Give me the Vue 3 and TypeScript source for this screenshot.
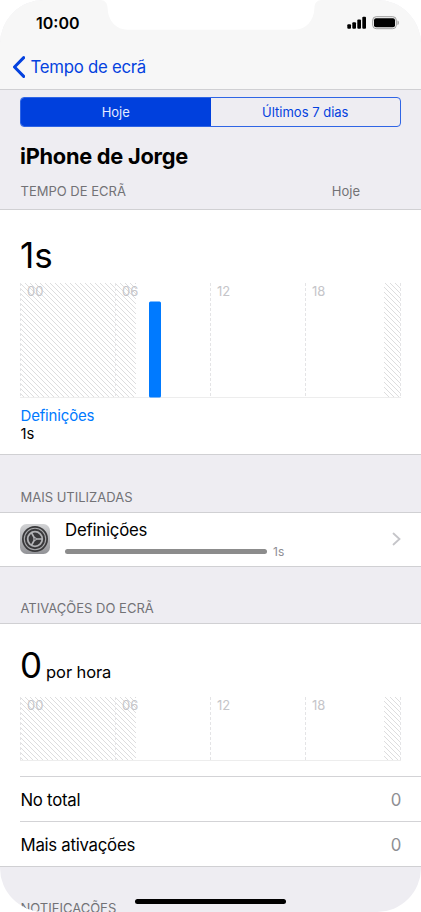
<script setup lang="ts">
interface Activation { label: string; value: number }
const hours: string[] = ['00', '06', '12', '18']
const usageBar = { start: 129, width: 12, height: 96 }
const appShare = 202
const activations: Activation[] = [
  { label: 'No total', value: 0 },
  { label: 'Mais ativações', value: 0 },
]
</script>

<template>
  <div class="phone">
    <svg class="notch" width="222" height="30" viewBox="0 0 222 30" aria-hidden="true">
      <path d="M0 0C5 0 7.5 3 7.5 8C8 21 16 29.7 28 29.7H194C206 29.7 214 21 214.500 8C214.500 3 217 0 222 0Z" fill="#fff" />
    </svg>

    <header class="top">
      <div class="status">
        <span class="clock">10:00</span>
        <div class="indicators">
          <svg width="20" height="13" viewBox="0 0 20 13">
            <rect x="0.300" y="8.200" width="3.700" height="4.500" rx="1" />
            <rect x="5.300" y="6.200" width="3.700" height="6.500" rx="1" />
            <rect x="10.300" y="3.500" width="3.700" height="9.200" rx="1" />
            <rect x="15.300" y="0.800" width="3.700" height="11.900" rx="1" />
          </svg>
          <svg width="28" height="14" viewBox="0 0 28 14">
            <rect x="0.700" y="0.700" width="23.600" height="12" rx="3.500" fill="#f7f7f7" stroke="#9c9c9c" />
            <rect x="2" y="2.200" width="21" height="9" rx="2" />
            <path d="M25.500 4.500C27.300 5 27.300 8.500 25.500 9Z" fill="#9c9c9c" />
          </svg>
        </div>
      </div>
      <div class="back">
        <svg width="13" height="22" viewBox="0 0 13 22"><path d="M11.700 1.600L2.500 11L11.700 20.400" fill="none" stroke="#0442df" stroke-width="3" stroke-linecap="round" stroke-linejoin="round" /></svg>
        <span>Tempo de ecrã</span>
      </div>
    </header>

    <section class="intro">
      <div class="segments">
        <div class="segment active">Hoje</div>
        <div class="segment">Últimos 7 dias</div>
      </div>
      <h1>iPhone de Jorge</h1>
      <div class="caption"><span>TEMPO DE ECRÃ</span><span>Hoje</span></div>
    </section>

    <section class="panel usage">
      <div class="big">1s</div>
      <div class="chart tall">
        <svg class="grid" width="381" height="115">
          <defs>
            <pattern id="hatch" width="5" height="5" patternUnits="userSpaceOnUse">
              <path d="M-1 -1L6 6M4 -1L6 1M-1 4L1 6" stroke="#d4d4d6" stroke-width="0.800" />
            </pattern>
          </defs>
          <rect width="116" height="114" fill="url(#hatch)" />
          <rect x="364" width="17" height="114" fill="url(#hatch)" />
          <path d="M.5 0V114M95.500 0V114M190.500 0V114M285.500 0V114M380.500 0V114" stroke="#e4e4e6" stroke-dasharray="3 2" />
          <path d="M0 114.500H381" stroke="#ededed" />
          <rect :x="usageBar.start" :y="114.500 - usageBar.height" :width="usageBar.width" :height="usageBar.height" rx="1.500" fill="#007aff" />
        </svg>
        <div class="hours"><span v-for="hour in hours" :key="hour">{{ hour }}</span></div>
      </div>
      <div class="legend">Definições</div>
      <div class="duration">1s</div>
    </section>

    <div class="heading"><span>MAIS UTILIZADAS</span></div>
    <section class="panel app">
      <svg class="app-icon" width="30" height="30" viewBox="0 0 30 30">
        <defs><linearGradient id="metal" x2="0" y2="1"><stop stop-color="#d2d3d5" /><stop offset="1" stop-color="#929397" /></linearGradient></defs>
        <rect width="30" height="30" rx="6.500" fill="url(#metal)" />
        <circle cx="15" cy="15" r="13" fill="#39393b" />
        <circle cx="15" cy="15" r="10.700" fill="none" stroke="#a8a9ac" stroke-width="1.100" />
        <circle cx="15" cy="15" r="7.300" fill="none" stroke="#b0b1b4" stroke-width="1.800" />
        <path d="M15 15H22M15 15L11.400 8.700M15 15L11.400 21.300" stroke="#b4b5b8" stroke-width="1.700" />
        <circle cx="15" cy="15" r="1.700" fill="#b4b5b8" /><circle cx="15" cy="15" r=".7" fill="#39393b" />
      </svg>
      <div class="app-info">
        <div class="app-name">Definições</div>
        <div class="meter"><i :style="{ width: appShare + 'px' }"></i><span>1s</span></div>
      </div>
      <svg class="chevron" width="9" height="14" viewBox="0 0 9 14"><path d="M1.500 1.500L7.500 7L1.500 12.500" fill="none" stroke="#c5c5c9" stroke-width="1.800" stroke-linecap="round" /></svg>
    </section>

    <div class="heading wake"><span>ATIVAÇÕES DO ECRÃ</span></div>
    <section class="panel pickups">
      <div class="rate"><span class="big">0</span><span class="unit">por hora</span></div>
      <div class="chart">
        <svg class="grid" width="381" height="64">
          <rect width="116" height="63" fill="url(#hatch)" />
          <rect x="364" width="17" height="63" fill="url(#hatch)" />
          <path d="M.5 0V63M95.500 0V63M190.500 0V63M285.500 0V63M380.500 0V63" stroke="#e4e4e6" stroke-dasharray="3 2" />
          <path d="M0 63.500H381" stroke="#ededed" />
        </svg>
        <div class="hours"><span v-for="hour in hours" :key="hour">{{ hour }}</span></div>
      </div>
      <div class="rows">
        <div v-for="item in activations" :key="item.label" class="row">
          <span>{{ item.label }}</span><span class="value">{{ item.value }}</span>
        </div>
      </div>
    </section>
    <div class="heading last"><span>NOTIFICAÇÕES</span></div>
    <div class="home"></div>
  </div>
</template>

<style>
body { background: #fff; }
</style>
<style scoped>
* { box-sizing: border-box; }
.phone { position: relative; width: 421px; height: 912px; overflow: hidden; border-radius: 44px; background: #eeedf2; color: #000; font-family: Inter, "Liberation Sans", sans-serif; white-space: nowrap; }
svg { display: block; flex: none; }
.notch { position: absolute; left: 100px; top: 0; }
.top { height: 90px; background: #f7f7f7; border-bottom: 1px solid #d0d0d3; }
.status { height: 46px; padding: 0 21px 0 36px; display: flex; justify-content: space-between; }
.clock { margin-top: 13px; line-height: 20px; font-size: 16px; font-weight: 600; }
.indicators { display: flex; gap: 5px; margin-top: 16px; }
.back { display: flex; align-items: center; height: 42px; padding-left: 12px; gap: 5.500px; color: #0442df; font-size: 16.800px; letter-spacing: -.27px; }
.intro { height: 120px; padding: 7px 20px 0; border-bottom: 1px solid #d0d0d3; }
.segments { display: flex; width: 381px; height: 30px; border: 1px solid #2f65e5; border-radius: 4px; overflow: hidden; color: #0442df; font-size: 13px; line-height: 29px; text-align: center; }
.segment { flex: 1; }
.active { color: #e4eaff; background: #0040dd; }
h1 { margin: 16px 0 0; font-size: 21.800px; line-height: 26px; font-weight: 700; letter-spacing: -.26px; }
.caption { display: flex; justify-content: space-between; margin-top: 14px; padding-right: 41px; color: #727276; font-size: 13px; line-height: 16px; }
.caption span:first-child, .heading span { padding-left: .5px; }
.panel { background: #fff; border-bottom: 1px solid #d0d0d3; }
.usage { height: 245px; padding: 25px 20px 0; }
.big { font-size: 35px; line-height: 40px; }
.chart { position: relative; height: 64px; }
.tall { height: 115px; margin-top: 8px; }
.grid { position: absolute; left: 0; top: 0; }
.hours { position: relative; display: grid; grid-template-columns: repeat(4, 95px); font-size: 13px; line-height: 16px; color: #c5c5c9; }
.hours span { padding-left: 7px; }
.legend { margin-top: 8px; padding-left: .5px; color: #007aff; font-size: 15px; line-height: 19px; letter-spacing: -.17px; }
.duration { padding-left: .5px; font-size: 14.800px; line-height: 18px; }
.heading { display: flex; align-items: flex-end; height: 58px; padding: 0 20px 7px; border-bottom: 1px solid #d0d0d3; color: #727276; font-size: 13px; line-height: 16px; }
.app { height: 54px; padding: 0 20px; display: flex; align-items: center; }
.app-icon, .chevron { margin-bottom: 1px; }
.app-info { margin-left: 15px; flex: 1; }
.app-name { font-size: 16.800px; line-height: 22px; margin-top: 1px; letter-spacing: -.22px; }
.meter { display: flex; align-items: center; gap: 6px; height: 20px; font-size: 12px; color: #8e8e93; }
.meter i { height: 5px; border-radius: 3px; background: #8c8c8c; }
.wake { height: 57px; }
.pickups { height: 243px; padding: 21px 0 0 20px; }
.rate { height: 52px; display: flex; align-items: baseline; gap: 4px; }
.unit { font-size: 16.500px; letter-spacing: -.1px; }
.rows { margin-top: 15px; }
.row { height: 45px; display: flex; justify-content: space-between; align-items: center; border-top: 1px solid #d3d3d6; padding: 1px 20px 0 .5px; font-size: 16.800px; letter-spacing: -.27px; }
.value { color: #8e8e93; }
.last { border: 0; height: 50px; padding-bottom: 1px; }
.home { position: absolute; left: 135px; top: 899px; width: 151px; height: 5px; border-radius: 3px; background: #000; }
</style>
